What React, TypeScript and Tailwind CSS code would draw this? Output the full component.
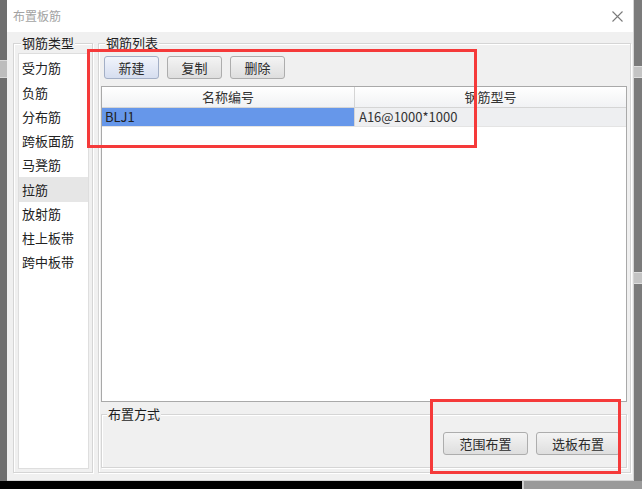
const types = ["受力筋", "负筋", "分布筋", "跨板面筋", "马凳筋", "拉筋", "放射筋", "柱上板带", "跨中板带"];

const GroupLabel = ({ text, left }: { text: string; left: string }) => (
  <span className={`absolute ${left} -top-[10px] bg-[#f0f0f0] px-[1px] leading-[17px] text-[13px] text-[#1e1e1e]`}>
    {text}
  </span>
);

const Btn = ({ text, blue, w }: { text: string; blue?: boolean; w: string }) => (
  <button
    className={`${w} h-[23px] rounded-[3px] border text-[13px] leading-none text-[#2b2b2b] ${
      blue
        ? "border-[#a3afc6] bg-gradient-to-b from-[#f1f4fb] to-[#d6def0]"
        : "border-[#adadad] bg-gradient-to-b from-[#f4f4f4] to-[#dedede]"
    }`}
  >
    {text}
  </button>
);

export default function App() {
  return (
    <div className="relative w-[642px] h-[489px] overflow-hidden bg-[#6f6f6f] font-['Noto_Sans_CJK_SC','Noto_Sans',sans-serif]">
      <div className="flex h-[481px]">
        {/* left strip of the window behind */}
        <div className="w-[7px] flex flex-col pt-[60px]">
          <div className="h-[18px] bg-[#bdbdbd] border-y border-[#d8d8d8]" />
        </div>

        {/* dialog */}
        <div className="w-[627px] flex flex-col bg-[#f0f0f0] border-r border-b border-[#d4d4d4]">
          <div className="h-[32px] bg-white flex items-center justify-between pl-[6px] pr-[10px]">
            <span className="text-[12px] text-[#a3a3a3]">布置板筋</span>
            <svg width="11" height="11" viewBox="0 0 11 11">
              <path d="M0.5 0.5L10.5 10.5M10.5 0.5L0.5 10.5" stroke="#7a7a7a" strokeWidth="1.1" />
            </svg>
          </div>

          <div className="flex-1 flex gap-[5px] pt-[11px] pl-[6px] pr-[2px] pb-[7px]">
            {/* 钢筋类型 */}
            <div className="relative w-[80px] border border-[#d5d5d5] shadow-[inset_1px_1px_0_#fff,1px_1px_0_#fff] pt-[9px] pl-[4px] pr-[3px] pb-[3px] flex">
              <GroupLabel text="钢筋类型" left="left-[7px]" />
              <div className="flex-1 bg-white border border-[#dedede] pt-[2px]">
                {types.map((t) => (
                  <div
                    key={t}
                    className={`h-[24.25px] flex items-center pl-[3px] text-[13px] text-[#222] ${
                      t === "拉筋" ? "bg-[#e6e6e6]" : ""
                    }`}
                  >
                    {t}
                  </div>
                ))}
              </div>
            </div>

            {/* 钢筋列表 */}
            <div className="relative flex-1 border border-[#d5d5d5] shadow-[inset_1px_1px_0_#fff,1px_1px_0_#fff] pt-[12px] pl-[2px] pr-[3px] pb-[4px] flex flex-col">
              <GroupLabel text="钢筋列表" left="left-[6px]" />
              <div className="flex gap-[8px] pl-[3px]">
                <Btn text="新建" blue w="w-[55px]" />
                <Btn text="复制" w="w-[55px]" />
                <Btn text="删除" w="w-[55px]" />
              </div>

              <div className="mt-[7px] flex-1 bg-white border border-[#a9a9a9] flex flex-col">
                <div className="flex h-[21px] bg-gradient-to-b from-white to-[#f1f2f4] border-b border-[#d5d5d5] text-[13px] text-[#333]">
                  <div className="w-[253px] flex items-center justify-center border-r border-[#d5d5d5]">名称编号</div>
                  <div className="flex-1 flex items-center justify-center">钢筋型号</div>
                </div>
                <div className="flex h-[19px] border-b border-[#e4e4e4] text-[13px] text-[#222]">
                  <div className="w-[253px] bg-[#6697ea] flex items-center pl-[3px] border-r border-[#d5d5d5]">BLJ1</div>
                  <div className="flex-1 bg-[#eeeff1] flex items-center pl-[4px] text-[#333]">A16@1000*1000</div>
                </div>
              </div>

              {/* 布置方式 */}
              <div className="relative mt-[12px] h-[54px] border border-[#d5d5d5] shadow-[inset_1px_1px_0_#fff,1px_1px_0_#fff] flex items-start justify-end gap-[8px] pt-[17px] pr-[6px]">
                <GroupLabel text="布置方式" left="left-[5px]" />
                <Btn text="范围布置" w="w-[85px]" />
                <Btn text="选板布置" w="w-[84px]" />
              </div>
            </div>
          </div>
        </div>

        {/* right strip of the window behind */}
        <div className="w-[8px] flex flex-col pt-[66px] bg-[#7b7b7b]">
          <div className="h-[12px] bg-[#c4c4c4] border-y border-[#dedede]" />
          <div className="h-[194px]" />
          <div className="h-[12px] bg-[#c4c4c4] border-y border-[#dedede]" />
        </div>
      </div>

      <div className="flex h-[8px]">
        <div className="w-[522px] bg-black" />
        <div className="flex-1 bg-[#9a9a9a] border-l-2 border-[#d0d0d0]" />
      </div>

      {/* annotation boxes */}
      <div className="absolute left-[87px] top-[49px] w-[390px] h-[99px] border-[3px] border-[#f53a3a]" />
      <div className="absolute left-[430px] top-[399px] w-[191px] h-[75px] border-[3px] border-[#f53a3a]" />
    </div>
  );
}
